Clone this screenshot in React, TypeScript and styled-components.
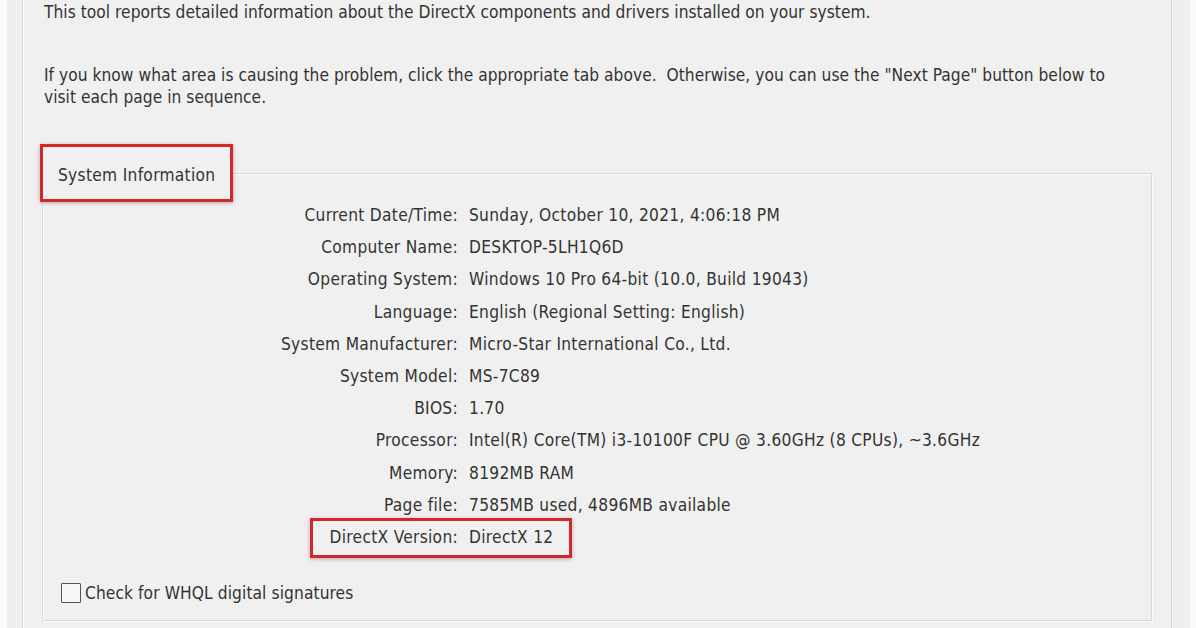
import styled, { createGlobalStyle } from 'styled-components';

const GlobalStyle = createGlobalStyle`
  html, body {
    margin: 0;
    padding: 0;
    background: #fafafa;
    overflow: hidden;
  }
  body {
    font-family: "DejaVu Sans Condensed", "DejaVu Sans", "Liberation Sans", sans-serif;
    font-stretch: condensed;
    color: #333333;
  }
`;

const Backdrop = styled.div`
  display: flex;
  min-height: 100vh;
  background: #fafafa;
`;

const Window = styled.div`
  display: flex;
  margin-left: 7px;
  padding: 0 18px 0 15px;
  background: #efefef;
`;

const Panel = styled.div`
  width: 1150px;
  box-sizing: border-box;
  padding: 1px 19px 0 21px;
  background: #f0f0f0;
  border-left: 1px solid #d4d4d4;
  border-right: 1px solid #d4d4d4;
  box-shadow: inset 1px 0 0 #ffffff;
  font-size: 17.2px;
  letter-spacing: 0.3px;
`;

const Paragraph = styled.p<{ $gap: number }>`
  margin: ${(p) => p.$gap}px 0 0;
  max-width: 1090px;
  line-height: 22px;
  letter-spacing: 0.04px;
`;

const Group = styled.fieldset`
  margin: 36px 0 0 -2px;
  padding: 0 0 15px;
  border: 1px solid #d8d8d8;
  box-shadow: inset 1px 1px 0 #fbfbfb, 1px 1px 0 #fbfbfb;
  min-width: 0;
`;

const Legend = styled.legend`
  margin-left: -3px;
  padding: 0 15px;
  height: 52px;
  line-height: 56px;
  border: 3px solid #d3272b;
  box-shadow: 0 1px 4px rgba(120, 0, 0, 0.35);
  background: #f0f0f0;
`;

const InfoList = styled.div`
  margin-top: -3px;
  display: flex;
  flex-direction: column;
`;

const Row = styled.div`
  position: relative;
  display: grid;
  grid-template-columns: 415px 1fr;
  column-gap: 11px;
  height: 32.2px;
  align-items: center;
`;

const Label = styled.span`
  text-align: right;
  white-space: nowrap;
`;

const Value = styled.span`
  white-space: nowrap;
`;

const Highlight = styled.div`
  position: absolute;
  left: 267px;
  top: -3px;
  width: 262px;
  height: 40px;
  box-sizing: border-box;
  border: 3px solid #d3272b;
  box-shadow: 0 1px 4px rgba(120, 0, 0, 0.35);
  pointer-events: none;
`;

const CheckRow = styled.label`
  display: flex;
  align-items: center;
  gap: 4px;
  margin: 28px 0 0 18px;
  height: 24px;
  letter-spacing: 0.1px;
`;

const CheckBox = styled.span`
  width: 18px;
  height: 18px;
  border: 1.5px solid #555;
  border-radius: 1px;
  background: #f7f7f7;
`;

const rows: { label: string; value: string; highlight?: boolean }[] = [
  { label: 'Current Date/Time:', value: 'Sunday, October 10, 2021, 4:06:18 PM' },
  { label: 'Computer Name:', value: 'DESKTOP-5LH1Q6D' },
  { label: 'Operating System:', value: 'Windows 10 Pro 64-bit (10.0, Build 19043)' },
  { label: 'Language:', value: 'English (Regional Setting: English)' },
  { label: 'System Manufacturer:', value: 'Micro-Star International Co., Ltd.' },
  { label: 'System Model:', value: 'MS-7C89' },
  { label: 'BIOS:', value: '1.70' },
  { label: 'Processor:', value: 'Intel(R) Core(TM) i3-10100F CPU @ 3.60GHz (8 CPUs), ~3.6GHz' },
  { label: 'Memory:', value: '8192MB RAM' },
  { label: 'Page file:', value: '7585MB used, 4896MB available' },
  { label: 'DirectX Version:', value: 'DirectX 12', highlight: true },
];

const App = () => {
  return (
    <>
      <GlobalStyle />
      <Backdrop>
        <Window>
          <Panel>
            <Paragraph $gap={0}>
              This tool reports detailed information about the DirectX components and drivers installed on your system.
            </Paragraph>
            <Paragraph $gap={41}>
              If you know what area is causing the problem, click the appropriate tab above.&nbsp; Otherwise, you can use the "Next Page" button below to visit each page in sequence.
            </Paragraph>
            <Group>
              <Legend>System Information</Legend>
              <InfoList>
                {rows.map((row) => (
                  <Row key={row.label}>
                    <Label>{row.label}</Label>
                    <Value>{row.value}</Value>
                    {row.highlight && <Highlight />}
                  </Row>
                ))}
              </InfoList>
              <CheckRow>
                <CheckBox />
                Check for WHQL digital signatures
              </CheckRow>
            </Group>
          </Panel>
        </Window>
      </Backdrop>
    </>
  );
};

export default App;
